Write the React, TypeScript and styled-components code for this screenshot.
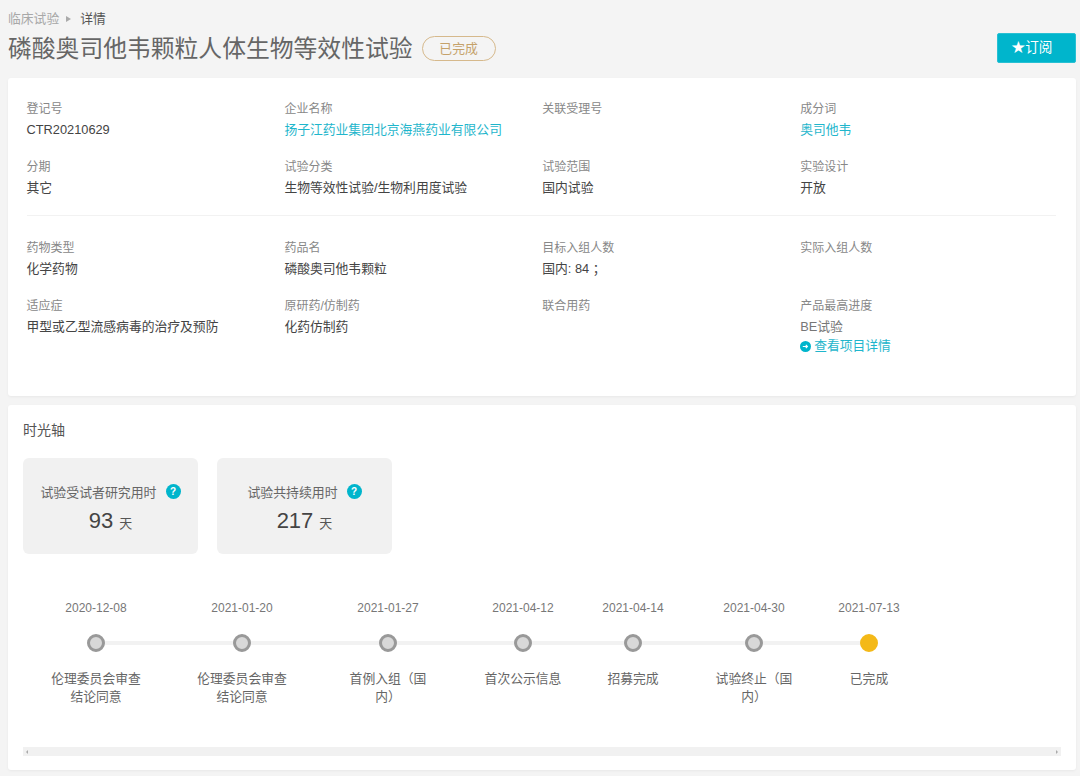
import React from "react";
import styled, { createGlobalStyle } from "styled-components";

const GlobalStyle = createGlobalStyle`
  html, body { margin: 0; padding: 0; background: #f4f4f4; }
  body {
    font-family: "Liberation Sans", "Noto Sans CJK SC", sans-serif;
    font-size: 12.8px;
    color: #333;
  }
  * { box-sizing: border-box; }
`;

const Page = styled.div`
  width: 1080px;
  height: 776px;
  overflow: hidden;
  padding: 0 4px 0 8px;
`;

const Breadcrumb = styled.div`
  display: flex;
  align-items: center;
  height: 18px;
  margin-top: 10px;
  line-height: 18px;
`;

const Crumb = styled.span`
  color: #a8a8a8;
`;

const CrumbArrow = styled.i`
  width: 0;
  height: 0;
  margin: 0 9px 0 7px;
  border-left: 5px solid #aaa;
  border-top: 3.5px solid transparent;
  border-bottom: 3.5px solid transparent;
`;

const CrumbCurrent = styled.span`
  color: #555;
`;

const Header = styled.div`
  display: flex;
  align-items: center;
  height: 42px;
  margin-top: -1px;
`;

const Title = styled.h1`
  margin: 0;
  padding-top: 1px;
  font-size: 23.8px;
  font-weight: 400;
  line-height: 40px;
  color: #666;
`;

const StatusTag = styled.span`
  width: 74px;
  height: 25px;
  margin-left: 9px;
  border: 1px solid #d6b98c;
  border-radius: 13px;
  line-height: 23px;
  text-align: center;
  color: #c5a26b;
`;

const SubscribeButton = styled.button`
  width: 79px;
  height: 30px;
  margin-left: auto;
  padding: 0 9px 0 0;
  border: 1px solid #28c0d3;
  border-radius: 2px;
  background: #00b5cc;
  color: #fff;
  font-family: inherit;
  font-size: 13.6px;
  line-height: 28px;
`;

const Card = styled.section`
  background: #fff;
  border-radius: 3px;
  box-shadow: 0 1px 3px rgba(0, 0, 0, 0.05);
`;

const InfoCard = styled(Card)`
  height: 318px;
  margin-top: 9px;
  padding: 21px 18px 0 18.5px;
`;

const InfoGrid = styled.div`
  display: grid;
  grid-template-columns: repeat(4, 1fr);
  row-gap: 17px;
`;

const Divider = styled.div`
  height: 1px;
  margin: 17px 2px 22px 0;
  background: #f2f2f2;
`;

const Label = styled.div`
  height: 20px;
  font-size: 12px;
  line-height: 20px;
  color: #888;
`;

const Value = styled.div<{ $link?: boolean; $muted?: boolean }>`
  height: 20px;
  margin-top: 1px;
  line-height: 20px;
  color: ${(p) => (p.$link ? "#1fb6cc" : p.$muted ? "#777" : "#444")};
`;

const ProjectLink = styled.a`
  display: flex;
  align-items: center;
  gap: 3px;
  height: 20px;
  margin-top: -1px;
  line-height: 20px;
  color: #1fb6cc;
`;

const TimelineCard = styled(Card)`
  height: 365px;
  margin-top: 9px;
  padding: 14px 15px 0;
`;

const SectionTitle = styled.h2`
  margin: 0;
  font-size: 14px;
  font-weight: 400;
  line-height: 22px;
  color: #555;
`;

const Stats = styled.div`
  display: flex;
  gap: 19px;
  margin-top: 17px;
`;

const StatBox = styled.div`
  width: 175px;
  height: 96px;
  padding-top: 23px;
  border-radius: 6px;
  background: #f1f1f1;
  text-align: center;
`;

const StatTitle = styled.div`
  display: flex;
  justify-content: center;
  align-items: center;
  gap: 9px;
  height: 20px;
  font-size: 12.9px;
  color: #666;
`;

const HelpIcon = styled.span`
  width: 15px;
  height: 15px;
  border-radius: 50%;
  background: #00b5cc;
  color: #fff;
  font-size: 10px;
  font-weight: 700;
  line-height: 15px;
`;

const StatValue = styled.div`
  margin-top: 6px;
  font-size: 22px;
  line-height: 28px;
  color: #444;
`;

const StatUnit = styled.span`
  margin-left: 6px;
  font-size: 13px;
  color: #555;
`;

const Track = styled.div`
  display: flex;
  margin-top: 45px;
`;

const Step = styled.div<{ $width: number }>`
  flex: none;
  width: ${(p) => p.$width}px;
  text-align: center;
`;

const StepDate = styled.div`
  height: 18px;
  font-size: 12px;
  line-height: 18px;
  color: #777;
`;

const NodeRow = styled.div<{ $first: boolean; $last: boolean }>`
  display: flex;
  justify-content: center;
  margin-top: 17px;
  background: linear-gradient(#f2f2f2, #f2f2f2) no-repeat;
  background-size: ${(p) => (p.$first || p.$last ? "50%" : "100%")} 4px;
  background-position: ${(p) => (p.$first ? "100%" : "0")} 50%;
`;

const Node = styled.span<{ $active: boolean }>`
  width: 18px;
  height: 18px;
  border-radius: 50%;
  border: 3px solid ${(p) => (p.$active ? "#f4b918" : "#999")};
  background: ${(p) => (p.$active ? "#f4b918" : "#d8d8d8")};
`;

const StepLabel = styled.div`
  max-width: 92px;
  margin: 18px auto 0;
  line-height: 18px;
  color: #666;
`;

const ScrollBar = styled.div`
  display: flex;
  justify-content: space-between;
  align-items: center;
  width: 1038px;
  height: 9px;
  margin-top: 41px;
  padding: 0 3px;
  background: #f1f1f1;
`;

const ScrollArrow = styled.i<{ $dir: "left" | "right" }>`
  width: 0;
  height: 0;
  border-top: 2px solid transparent;
  border-bottom: 2px solid transparent;
  ${(p) => (p.$dir === "left" ? "border-right: 2px solid #aaa;" : "border-left: 2px solid #aaa;")}
`;

const ArrowIcon = () => (
  <svg width="11" height="11" viewBox="0 0 11 11">
    <circle cx="5.5" cy="5.5" r="5.5" fill="#00b5cc" />
    <path d="M2.8 5.5h4.4M5.8 3.9l1.6 1.6-1.6 1.6" fill="none" stroke="#fff" strokeWidth="1.2" />
  </svg>
);

const topFields = [
  { label: "登记号", value: "CTR20210629" },
  { label: "企业名称", value: "扬子江药业集团北京海燕药业有限公司", link: true },
  { label: "关联受理号", value: "" },
  { label: "成分词", value: "奥司他韦", link: true },
  { label: "分期", value: "其它" },
  { label: "试验分类", value: "生物等效性试验/生物利用度试验" },
  { label: "试验范围", value: "国内试验" },
  { label: "实验设计", value: "开放" },
];

const bottomFields = [
  { label: "药物类型", value: "化学药物" },
  { label: "药品名", value: "磷酸奥司他韦颗粒" },
  { label: "目标入组人数", value: "国内: 84 ；" },
  { label: "实际入组人数", value: "" },
  { label: "适应症", value: "甲型或乙型流感病毒的治疗及预防" },
  { label: "原研药/仿制药", value: "化药仿制药" },
  { label: "联合用药", value: "" },
];

const steps = [
  { date: "2020-12-08", label: "伦理委员会审查结论同意", width: 146 },
  { date: "2021-01-20", label: "伦理委员会审查结论同意", width: 146 },
  { date: "2021-01-27", label: "首例入组（国内）", width: 146 },
  { date: "2021-04-12", label: "首次公示信息", width: 124 },
  { date: "2021-04-14", label: "招募完成", width: 96 },
  { date: "2021-04-30", label: "试验终止（国内）", width: 146 },
  { date: "2021-07-13", label: "已完成", width: 84 },
];

type Field = { label: string; value: string; link?: boolean };

const InfoField = ({ label, value, link }: Field) => (
  <div>
    <Label>{label}</Label>
    <Value $link={link}>{value}</Value>
  </div>
);

export default function App() {
  return (
    <>
      <GlobalStyle />
      <Page>
        <Breadcrumb>
          <Crumb>临床试验</Crumb>
          <CrumbArrow />
          <CrumbCurrent>详情</CrumbCurrent>
        </Breadcrumb>
        <Header>
          <Title>磷酸奥司他韦颗粒人体生物等效性试验</Title>
          <StatusTag>已完成</StatusTag>
          <SubscribeButton>★订阅</SubscribeButton>
        </Header>

        <InfoCard>
          <InfoGrid>
            {topFields.map((f) => (
              <InfoField key={f.label} {...f} />
            ))}
          </InfoGrid>
          <Divider />
          <InfoGrid>
            {bottomFields.map((f) => (
              <InfoField key={f.label} {...f} />
            ))}
            <div>
              <Label>产品最高进度</Label>
              <Value $muted>BE试验</Value>
              <ProjectLink>
                <ArrowIcon />
                查看项目详情
              </ProjectLink>
            </div>
          </InfoGrid>
        </InfoCard>

        <TimelineCard>
          <SectionTitle>时光轴</SectionTitle>
          <Stats>
            <StatBox>
              <StatTitle>
                试验受试者研究用时
                <HelpIcon>?</HelpIcon>
              </StatTitle>
              <StatValue>
                93<StatUnit>天</StatUnit>
              </StatValue>
            </StatBox>
            <StatBox>
              <StatTitle>
                试验共持续用时
                <HelpIcon>?</HelpIcon>
              </StatTitle>
              <StatValue>
                217<StatUnit>天</StatUnit>
              </StatValue>
            </StatBox>
          </Stats>
          <Track>
            {steps.map((s, i) => (
              <Step key={s.date} $width={s.width}>
                <StepDate>{s.date}</StepDate>
                <NodeRow $first={i === 0} $last={i === steps.length - 1}>
                  <Node $active={i === steps.length - 1} />
                </NodeRow>
                <StepLabel>{s.label}</StepLabel>
              </Step>
            ))}
          </Track>
          <ScrollBar>
            <ScrollArrow $dir="left" />
            <ScrollArrow $dir="right" />
          </ScrollBar>
        </TimelineCard>
      </Page>
    </>
  );
}
